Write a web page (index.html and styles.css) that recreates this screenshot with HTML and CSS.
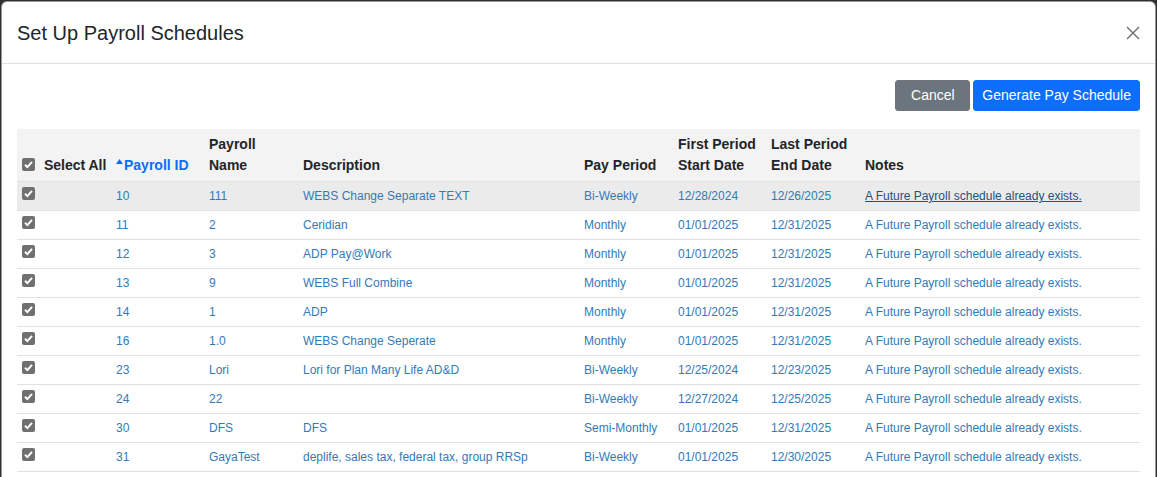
FILE: index.html
```html
<!DOCTYPE html>
<html lang="en">
<head>
<meta charset="utf-8">
<title>Set Up Payroll Schedules</title>
<link rel="stylesheet" href="styles.css">
</head>
<body>
<div class="modal">
  <div class="modal-header">
    <h5 class="modal-title">Set Up Payroll Schedules</h5>
    <button class="btn-close" aria-label="Close">
      <svg width="14" height="14" viewBox="0 0 14 14"><path d="M1 1L13 13M13 1L1 13" stroke="#6c6c6c" stroke-width="1.4" fill="none"/></svg>
    </button>
  </div>
  <div class="modal-body">
    <div class="actions">
      <button class="btn btn-secondary">Cancel</button>
      <button class="btn btn-primary">Generate Pay Schedule</button>
    </div>
    <table class="grid">
      <colgroup>
        <col class="c94"><col class="c93"><col class="c94"><col class="c281"><col class="c94"><col class="c93"><col class="c94"><col>
      </colgroup>
      <thead>
        <tr>
          <th><span class="chk"><svg width="13" height="13" viewBox="0 0 13 13"><path d="M3 6.8L5.4 9.1L10 3.9" stroke="#fff" stroke-width="2" fill="none"/></svg></span> Select All</th>
          <th class="sorted"><svg class="caret" width="7" height="5" viewBox="0 0 7 5"><path d="M0 5L3.5 0L7 5Z" fill="#0d6efd"/></svg>Payroll ID</th>
          <th>Payroll<br>Name</th>
          <th>Description</th>
          <th>Pay Period</th>
          <th>First Period<br>Start Date</th>
          <th>Last Period<br>End Date</th>
          <th>Notes</th>
        </tr>
      </thead>
      <tbody>
        <tr class="hover"><td><span class="chk"><svg width="13" height="13" viewBox="0 0 13 13"><path d="M3 6.8L5.4 9.1L10 3.9" stroke="#fff" stroke-width="2" fill="none"/></svg></span></td><td>10</td><td>111</td><td>WEBS Change Separate TEXT</td><td>Bi-Weekly</td><td>12/28/2024</td><td>12/26/2025</td><td class="note">A Future Payroll schedule already exists.</td></tr>
        <tr><td><span class="chk"><svg width="13" height="13" viewBox="0 0 13 13"><path d="M3 6.8L5.4 9.1L10 3.9" stroke="#fff" stroke-width="2" fill="none"/></svg></span></td><td>11</td><td>2</td><td>Ceridian</td><td>Monthly</td><td>01/01/2025</td><td>12/31/2025</td><td>A Future Payroll schedule already exists.</td></tr>
        <tr><td><span class="chk"><svg width="13" height="13" viewBox="0 0 13 13"><path d="M3 6.8L5.4 9.1L10 3.9" stroke="#fff" stroke-width="2" fill="none"/></svg></span></td><td>12</td><td>3</td><td>ADP Pay@Work</td><td>Monthly</td><td>01/01/2025</td><td>12/31/2025</td><td>A Future Payroll schedule already exists.</td></tr>
        <tr><td><span class="chk"><svg width="13" height="13" viewBox="0 0 13 13"><path d="M3 6.8L5.4 9.1L10 3.9" stroke="#fff" stroke-width="2" fill="none"/></svg></span></td><td>13</td><td>9</td><td>WEBS Full Combine</td><td>Monthly</td><td>01/01/2025</td><td>12/31/2025</td><td>A Future Payroll schedule already exists.</td></tr>
        <tr><td><span class="chk"><svg width="13" height="13" viewBox="0 0 13 13"><path d="M3 6.8L5.4 9.1L10 3.9" stroke="#fff" stroke-width="2" fill="none"/></svg></span></td><td>14</td><td>1</td><td>ADP</td><td>Monthly</td><td>01/01/2025</td><td>12/31/2025</td><td>A Future Payroll schedule already exists.</td></tr>
        <tr><td><span class="chk"><svg width="13" height="13" viewBox="0 0 13 13"><path d="M3 6.8L5.4 9.1L10 3.9" stroke="#fff" stroke-width="2" fill="none"/></svg></span></td><td>16</td><td>1.0</td><td>WEBS Change Seperate</td><td>Monthly</td><td>01/01/2025</td><td>12/31/2025</td><td>A Future Payroll schedule already exists.</td></tr>
        <tr><td><span class="chk"><svg width="13" height="13" viewBox="0 0 13 13"><path d="M3 6.8L5.4 9.1L10 3.9" stroke="#fff" stroke-width="2" fill="none"/></svg></span></td><td>23</td><td>Lori</td><td>Lori for Plan Many Life AD&amp;D</td><td>Bi-Weekly</td><td>12/25/2024</td><td>12/23/2025</td><td>A Future Payroll schedule already exists.</td></tr>
        <tr><td><span class="chk"><svg width="13" height="13" viewBox="0 0 13 13"><path d="M3 6.8L5.4 9.1L10 3.9" stroke="#fff" stroke-width="2" fill="none"/></svg></span></td><td>24</td><td>22</td><td></td><td>Bi-Weekly</td><td>12/27/2024</td><td>12/25/2025</td><td>A Future Payroll schedule already exists.</td></tr>
        <tr><td><span class="chk"><svg width="13" height="13" viewBox="0 0 13 13"><path d="M3 6.8L5.4 9.1L10 3.9" stroke="#fff" stroke-width="2" fill="none"/></svg></span></td><td>30</td><td>DFS</td><td>DFS</td><td>Semi-Monthly</td><td>01/01/2025</td><td>12/31/2025</td><td>A Future Payroll schedule already exists.</td></tr>
        <tr><td><span class="chk"><svg width="13" height="13" viewBox="0 0 13 13"><path d="M3 6.8L5.4 9.1L10 3.9" stroke="#fff" stroke-width="2" fill="none"/></svg></span></td><td>31</td><td>GayaTest</td><td>deplife, sales tax, federal tax, group RRSp</td><td>Bi-Weekly</td><td>01/01/2025</td><td>12/30/2025</td><td>A Future Payroll schedule already exists.</td></tr>
      </tbody>
    </table>
  </div>
</div>
</body>
</html>
```

FILE: styles.css
```css
* { box-sizing: border-box; }
html, body { height: 100%; }
body {
  margin: 0;
  background: #2f3030;
  font-family: "Liberation Sans", Arial, sans-serif;
  color: #212529;
  overflow: hidden;
}
.modal {
  margin: 1px 1px 0 1px;
  width: 1155px;
  height: 480px;
  background: #fff;
  border: 1px solid rgba(0,0,0,.4);
  border-bottom: none;
  border-radius: 6px 6px 0 0;
  overflow: hidden;
}
.modal-header {
  display: flex;
  align-items: center;
  justify-content: space-between;
  padding: 16px 15px 16px 15px;
  border-bottom: 1px solid #dee2e6;
  height: 62px;
}
.modal-title {
  margin: 0;
  font-size: 20px;
  font-weight: 400;
  line-height: 30px;
  color: #212529;
}
.btn-close {
  border: 0;
  background: transparent;
  padding: 0;
  width: 14px;
  height: 14px;
  display: flex;
  cursor: pointer;
}
.modal-body {
  padding: 16px 15px 0 15px;
}
.actions {
  display: flex;
  justify-content: flex-end;
  gap: 3px;
  margin-bottom: 18px;
}
.btn {
  font-family: "Liberation Sans", Arial, sans-serif;
  font-size: 14px;
  line-height: 21px;
  padding: 4px 8px;
  border-radius: 3px;
  border: 1px solid transparent;
  color: #fff;
  height: 31px;
}
.btn-secondary { background: #6c757d; border-color: #6c757d; min-width: 75px; }
.btn-primary { background: #0d6efd; border-color: #0d6efd; padding: 4px 8px; }
.grid {
  width: 1123px;
  table-layout: fixed;
  border-collapse: collapse;
}
.c94 { width: 94px; }
.c93 { width: 93px; }
.c281 { width: 281px; }
.grid th {
  background: #f3f3f3;
  text-align: left;
  vertical-align: bottom;
  font-size: 14px;
  font-weight: 700;
  line-height: 21px;
  padding: 5px;
  color: #212529;
  white-space: nowrap;
  border-bottom: 1px solid #dee2e6;
}
.grid th.sorted { color: #0d6efd; }
.caret {
  vertical-align: 6px;
  margin-right: 1px;
}
.grid th .chk { vertical-align: -1px; margin-right: 5px; }
.grid td {
  font-size: 12px;
  line-height: 18px;
  padding: 5px;
  color: #337ab7;
  border-bottom: 1px solid #dee2e6;
  vertical-align: middle;
  white-space: nowrap;
}
.grid tr.hover td { background: #ebebeb; }
.grid td.note { color: #23527c; text-decoration: underline; }
.chk {
  display: inline-flex;
  width: 13px;
  height: 13px;
  background: #707070;
  border-radius: 2px;
  vertical-align: -1px;
}
.grid td .chk { position: relative; top: -1px; }
```
